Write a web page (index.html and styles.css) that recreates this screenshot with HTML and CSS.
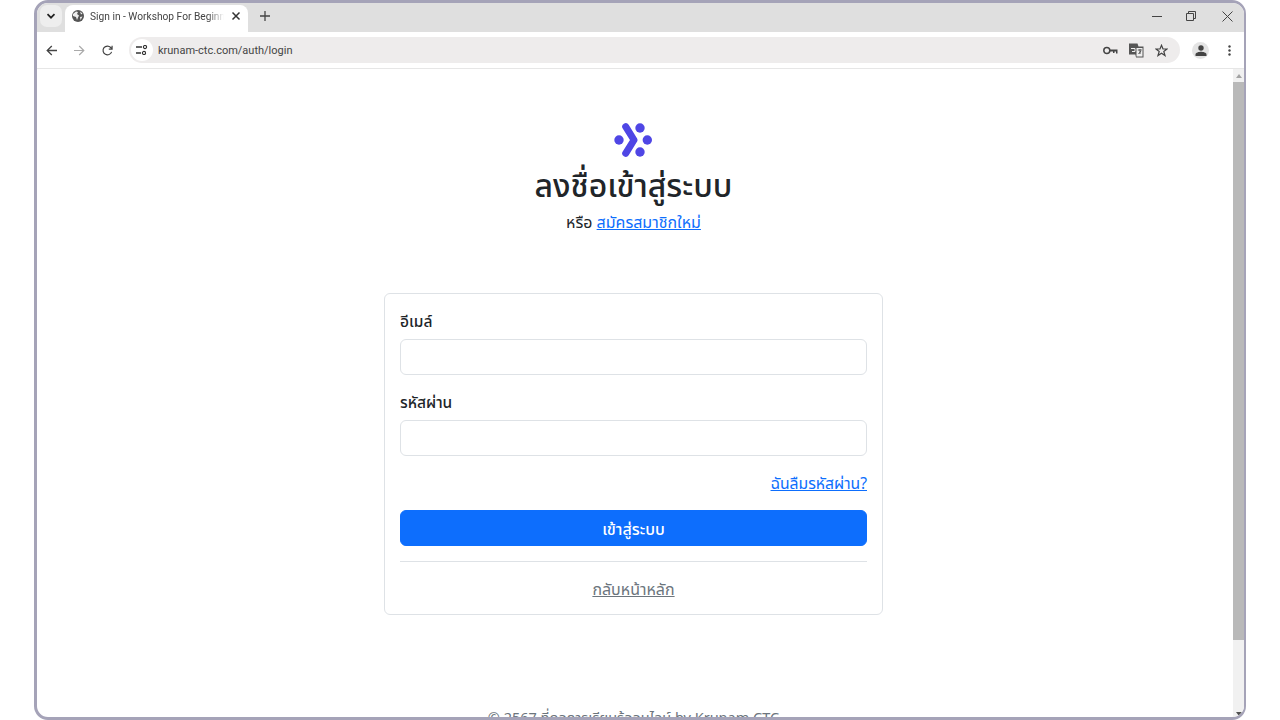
FILE: index.html
```html
<!DOCTYPE html>
<html lang="th">
<head>
    <meta charset="UTF-8">
    <title>Sign in - Workshop For Beginner</title>
    <link rel="stylesheet" href="styles.css">
</head>
<body>
<div class="window">
    <!-- tab strip -->
    <div class="tabstrip">
        <div class="tab-search">
            <svg width="12" height="12" viewBox="0 0 12 12"><path d="M2.500 4.200 6 7.700l3.500-3.500" fill="none" stroke="#222" stroke-width="1.700"/></svg>
        </div>
        <div class="tab">
            <svg class="globe" width="12" height="12" viewBox="0 0 12 12"><circle cx="6" cy="6" r="6" fill="#555"/><path d="M1 4l3-2.500 2 .5-1 2 2 1.500-1 2-1 2.500-1-3-3-1zM8 1.500l2.500 2-1.500 1zM8 7l2.500-.5-2 3.500z" fill="#eee"/></svg>
            <span class="tab-title">Sign in - Workshop For Beginner</span>
            <svg class="tab-close" width="10" height="10" viewBox="0 0 10 10"><path d="M1.500 1.500l7 7M8.500 1.500l-7 7" stroke="#333" stroke-width="1.500"/></svg>
        </div>
        <svg class="new-tab" width="10" height="10" viewBox="0 0 10 10"><path d="M5 0v10M0 5h10" stroke="#444" stroke-width="1.300"/></svg>
        <div class="window-btns">
            <svg width="10" height="10" viewBox="0 0 10 10"><path d="M0 5.500h10" stroke="#444"/></svg>
            <svg width="10" height="10" viewBox="0 0 10 10"><path d="M.5 2.500h7v7h-7zM2.500 2.500v-2h7v7h-2" fill="none" stroke="#444"/></svg>
            <svg class="win-close" width="11" height="11" viewBox="0 0 11 11"><path d="M.5.500l10 10M10.500.500l-10 10" stroke="#444"/></svg>
        </div>
    </div>

    <!-- toolbar -->
    <div class="toolbar">
        <svg width="11" height="11" viewBox="0 0 11 11"><path d="M11 5.500H1.200M5.800 1 1.200 5.500 5.800 10" fill="none" stroke="#444" stroke-width="1.300"/></svg>
        <svg class="nav-next" width="11" height="11" viewBox="0 0 11 11"><path d="M0 5.500h9.800M5.200 1l4.600 4.500L5.200 10" fill="none" stroke="#aaa" stroke-width="1.200"/></svg>
        <svg class="nav-next" width="11" height="11" viewBox="0 0 12 12"><path d="M10.500 7.500A4.800 4.800 0 1 1 9.500 2.700L11 4.200M11 .8v3.600H7.400" fill="none" stroke="#444" stroke-width="1.300"/></svg>
        <div class="omnibox">
            <div class="site-info">
                <svg width="12" height="10" viewBox="0 0 12 10"><path d="M0 2h6M0 8h5" stroke="#333" stroke-width="1.300"/><circle cx="9" cy="2" r="1.600" fill="none" stroke="#333" stroke-width="1.100"/><circle cx="8" cy="8" r="1.600" fill="none" stroke="#333" stroke-width="1.100"/></svg>
            </div>
            <span class="url">krunam-ctc.com/auth/login</span>
            <div class="omni-icons">
                <svg width="15" height="9" viewBox="0 0 15 9"><circle cx="3.800" cy="4.500" r="3" fill="none" stroke="#444" stroke-width="1.500"/><path d="M7 3.500h7.500V7.500H13V5.500h-1.500V7H10V5.500H7z" fill="#444"/></svg>
                <svg width="15" height="15" viewBox="0 0 15 15"><path d="M0 .5h8.500l1 3H14.500V14.500H7l-.7-3H0z" fill="#555"/><rect x="7.500" y="5" width="6" height="8.500" fill="#eee"/><path d="M2 5.500h4v3H3" fill="none" stroke="#eee"/><path d="M8.800 7h4M11 6v5M9.500 11l2.500-3" fill="none" stroke="#555"/></svg>
                <svg width="13" height="13" viewBox="0 0 13 13"><path d="M6.500 1.300 8 5h4l-3.200 2.500 1.200 4-3.500-2.300L3 11.500l1.200-4L1 5h4z" fill="none" stroke="#444" stroke-width="1.200"/></svg>
            </div>
        </div>
        <div class="avatar">
            <svg width="12" height="11" viewBox="0 0 12 11"><circle cx="6" cy="3" r="2.700" fill="#444"/><path d="M.5 11V9.500C.5 7.500 4 6.700 6 6.700s5.500.8 5.500 2.800V11z" fill="#444"/></svg>
        </div>
        <svg class="kebab" width="3" height="11" viewBox="0 0 3 11"><circle cx="1.500" cy="1.500" r="1.200" fill="#444"/><circle cx="1.500" cy="5.500" r="1.200" fill="#444"/><circle cx="1.500" cy="9.500" r="1.200" fill="#444"/></svg>
    </div>

    <div class="viewport">
        <main class="page">
            <svg class="logo" width="38" height="36" viewBox="0 0 38 36">
                <g fill="#4f46e5">
                    <circle cx="5" cy="18" r="4.700"/>
                    <circle cx="33.300" cy="18" r="4.700"/>
                    <circle cx="26" cy="6" r="4.700"/>
                    <circle cx="26" cy="30" r="4.700"/>
                </g>
                <path d="M11.700 4.700 20 18l-8.300 13.300" fill="none" stroke="#4f46e5" stroke-width="7" stroke-linecap="round" stroke-linejoin="round"/>
            </svg>
            <h1 class="title">ลงชื่อเข้าสู่ระบบ</h1>
            <p class="subtitle">หรือ <a href="#">สมัครสมาชิกใหม่</a></p>

            <div class="card">
                <label class="field-label">อีเมล์</label>
                <input class="field" type="text">
                <label class="field-label">รหัสผ่าน</label>
                <input class="field" type="password">
                <div class="forgot"><a href="#">ฉันลืมรหัสผ่าน?</a></div>
                <button class="btn-primary">เข้าสู่ระบบ</button>
                <hr class="divider">
                <div class="back"><a href="#">กลับหน้าหลัก</a></div>
            </div>

            <footer class="footer">© 2567 ที่ดอการเรียนรู้ออนไลน์ by Krunam CTC</footer>
        </main>
        <div class="scrollbar">
            <div class="arrow-up"></div>
            <div class="thumb"></div>
            <div class="arrow-down"></div>
        </div>
    </div>
</div>
</body>
</html>
```

FILE: styles.css
```css
* {
    box-sizing: border-box;
}

html, body {
    margin: 0;
    height: 720px;
    overflow: hidden;
    background-color: #fff;
}

body {
    padding: 0 34px;
    font-family: "Noto Sans", "Noto Sans Thai", "Liberation Sans", sans-serif;
    color: #212529;
}

.window {
    height: 720px;
    border: 3px solid #a5a3b8;
    border-right-width: 2px;
    border-radius: 14px;
    overflow: hidden;
    display: flex;
    flex-direction: column;
}

.tabstrip {
    height: 29px;
    background-color: #dfdfdf;
    display: flex;
    align-items: center;
    padding: 0 0 3px 3px;
    flex-shrink: 0;
}

.tab-search {
    width: 22px;
    height: 22px;
    background-color: #eeeeee;
    border-radius: 7px;
    display: flex;
    align-items: center;
    justify-content: center;
}

.tab {
    width: 183px;
    height: 27px;
    margin: 0 0 -3px 3px;
    align-self: flex-end;
    background-color: #fff;
    border-radius: 8px 8px 0 0;
    display: flex;
    align-items: center;
    padding: 0 7px 5px 7px;
}

.globe {
    flex-shrink: 0;
}

.tab-title {
    font-family: Roboto, "Liberation Sans", sans-serif;
    font-size: 10.2px;
    color: #444;
    margin-left: 6px;
    width: 134px;
    white-space: nowrap;
    overflow: hidden;
    -webkit-mask-image: linear-gradient(to right, #000 88%, transparent);
    mask-image: linear-gradient(to right, #000 88%, transparent);
}

.tab-close {
    margin-left: 7px;
    flex-shrink: 0;
}

.new-tab {
    margin-left: 12px;
}

.window-btns {
    margin-left: auto;
    display: flex;
    align-items: center;
    gap: 24px;
    padding-right: 11px;
}

.win-close {
    margin-left: 2px;
}

.toolbar {
    height: 37px;
    background-color: #fff;
    border-bottom: 1px solid #e6e6e6;
    display: flex;
    align-items: center;
    padding: 0 13.5px 0 9px;
    flex-shrink: 0;
}

.nav-next {
    margin-left: 17px;
}

.omnibox {
    flex: 1;
    height: 26px;
    margin-left: 16px;
    background-color: #eeecec;
    border-radius: 13px;
    display: flex;
    align-items: center;
    padding: 0 12px 0 2px;
}

.site-info {
    width: 22px;
    height: 22px;
    background-color: #fff;
    border-radius: 50%;
    display: flex;
    align-items: center;
    justify-content: center;
}

.url {
    font-family: Roboto, "Liberation Sans", sans-serif;
    font-size: 11px;
    color: #444;
    margin-left: 5px;
}

.omni-icons {
    margin-left: auto;
    display: flex;
    align-items: center;
    gap: 11px;
}

.avatar {
    width: 17px;
    height: 17px;
    margin-left: 12px;
    background-color: #e4e4e4;
    border-radius: 50%;
    display: flex;
    align-items: center;
    justify-content: center;
}

.kebab {
    margin-left: 18.5px;
}

.viewport {
    flex: 1;
    display: flex;
    min-height: 0;
}

.page {
    flex: 1;
    display: flex;
    flex-direction: column;
    align-items: center;
    padding: 53px 3px 0 0;
    overflow: hidden;
}

.logo {
    display: block;
    flex-shrink: 0;
    margin-right: 1px;
}

.title {
    font-size: 32px;
    font-weight: 500;
    line-height: 38px;
    margin: 8px 0 0;
    flex-shrink: 0;
}

.subtitle {
    font-size: 16px;
    line-height: 24px;
    margin: 6px 0 0;
    flex-shrink: 0;
}

a {
    color: #0d6efd;
}

.card {
    width: 499px;
    height: 322px;
    margin-top: 59px;
    border: 1px solid #dee2e6;
    border-radius: 6px;
    padding: 16px 15px 13px;
    display: flex;
    flex-direction: column;
    flex-shrink: 0;
}

.field-label {
    font-size: 15.5px;
    line-height: 22px;
    margin-bottom: 7px;
    font-weight: 500;
}

.field {
    display: block;
    width: 100%;
    height: 36px;
    flex-shrink: 0;
    border: 1px solid #dee2e6;
    border-radius: 6px;
    margin-bottom: 15.5px;
    background-color: #fff;
}

.forgot {
    font-size: 15.7px;
    line-height: 24px;
    text-align: right;
}

.btn-primary {
    height: 36px;
    flex-shrink: 0;
    margin-top: 15px;
    padding: 4px 6px 0;
    font-family: inherit;
    font-size: 16px;
    font-weight: 500;
    color: #fff;
    background-color: #0d6efd;
    border: 1px solid #0d6efd;
    border-radius: 6px;
}

.divider {
    width: 100%;
    margin: 15px 0 0;
    border: 0;
    border-top: 1px solid #dee2e6;
}

.back {
    font-size: 16px;
    line-height: 24px;
    text-align: center;
    margin-top: 15px;
}

.back a {
    color: #6c757d;
}

.footer {
    font-size: 14.5px;
    line-height: 24px;
    color: #6c757d;
    margin-top: 90px;
    flex-shrink: 0;
    white-space: nowrap;
}

.scrollbar {
    width: 11px;
    background-color: #f1f1f1;
    display: flex;
    flex-direction: column;
    flex-shrink: 0;
}

.arrow-up {
    width: 0;
    height: 0;
    margin: 5px auto 4px;
    border: 3px solid transparent;
    border-top: 0;
    border-bottom: 4px solid #a3a3a3;
}

.thumb {
    height: 558px;
    background-color: #b9b9b9;
}

.arrow-down {
    width: 0;
    height: 0;
    margin: auto auto 1px;
    border: 3px solid transparent;
    border-bottom: 0;
    border-top: 4px solid #505050;
}
```
